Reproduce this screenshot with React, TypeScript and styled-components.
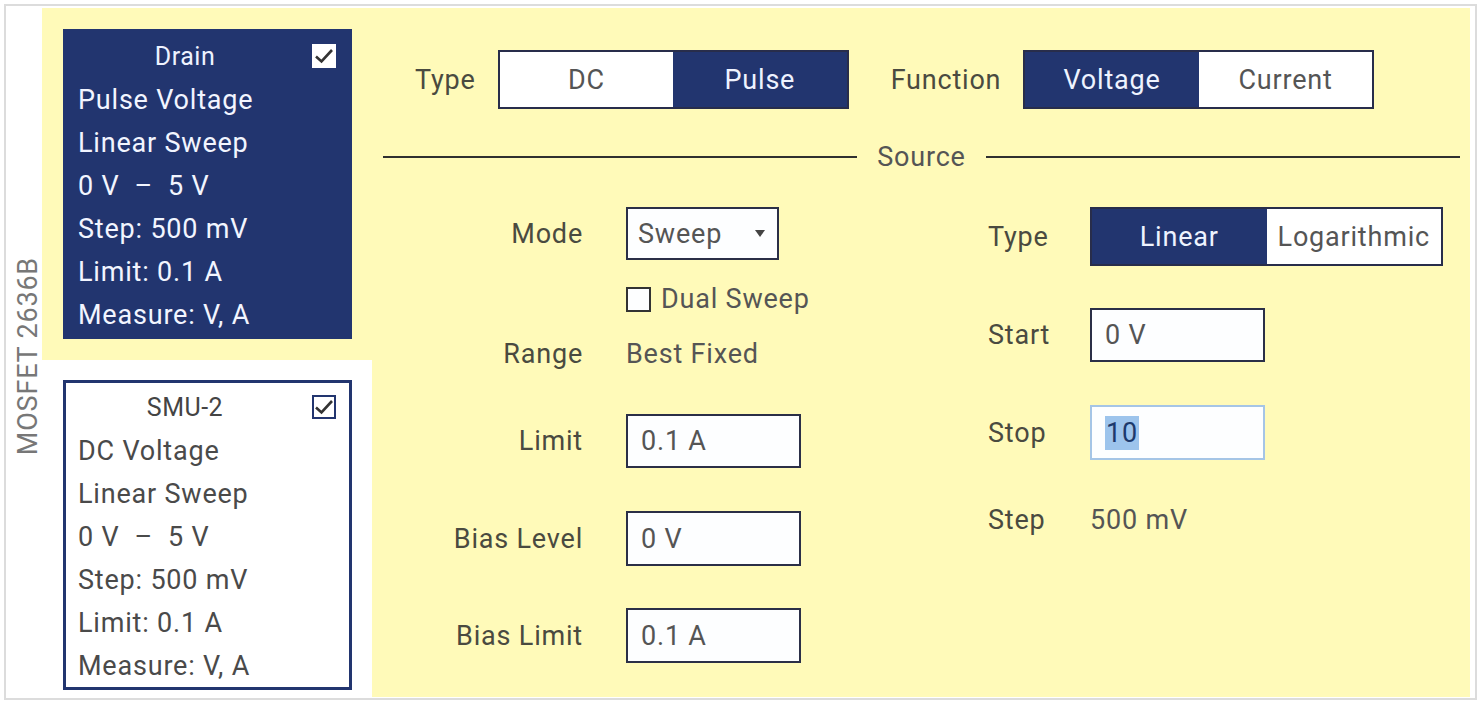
import React from 'react';
import styled, {createGlobalStyle} from 'styled-components';

const navy = '#22356f';
const yellow = '#fffab9';
const ink = '#4a4a40';

const GlobalStyle = createGlobalStyle`
  html, body {
    margin: 0;
    padding: 0;
    background: #fff;
  }
  body {
    font-family: Roboto, "Noto Sans", "Liberation Sans", sans-serif;
    letter-spacing: 0.8px;
  }
  * {
    box-sizing: border-box;
  }
`;

const Frame = styled.div`
  margin: 4px;
  height: 696px;
  border: 2px solid #dcdcdc;
  padding: 2px 5px 1px 2px;
  display: flex;
  background: #fff;
`;

const SideLabel = styled.div`
  width: 34px;
  display: flex;
  align-items: center;
  justify-content: center;
  padding: 8px 0 0 6px;
  span {
    writing-mode: vertical-rl;
    transform: rotate(180deg);
    font-size: 27px;
    color: #777;
    white-space: nowrap;
  }
`;

const Nav = styled.div`
  width: 330px;
  display: flex;
  flex-direction: column;
`;

const NavSlot = styled.div<{$active?: boolean}>`
  background: ${(p) => (p.$active ? yellow : '#fff')};
  padding: ${(p) => (p.$active ? '21px 20px 0 21px' : '20px 20px 0 21px')};
  height: ${(p) => (p.$active ? '352px' : 'auto')};
  flex: ${(p) => (p.$active ? '0 0 auto' : '1')};
`;

const Card = styled.div<{$active?: boolean}>`
  height: 310px;
  border: 3px solid ${navy};
  background: ${(p) => (p.$active ? navy : '#fff')};
  color: ${(p) => (p.$active ? '#f2f5ff' : '#4a4a4a')};
  padding: 1px 0 0 12px;
  font-size: 27px;
  line-height: 43px;
`;

const CardHead = styled.div`
  display: flex;
  align-items: center;
  height: 46px;
  padding-right: 13px;
`;

const CardTitle = styled.div<{$active?: boolean}>`
  flex: 1;
  text-align: center;
  padding-right: 20px;
  font-size: 25px;
  letter-spacing: 0.5px;
  color: ${(p) => (p.$active ? '#eef2ff' : '#444')};
`;

const CardLine = styled.div`
  white-space: pre;
`;

const Tick = styled.div<{$active?: boolean}>`
  width: 24px;
  height: 24px;
  background: #fff;
  border: ${(p) => (p.$active ? 'none' : `2px solid ${navy}`)};
  display: flex;
  align-items: center;
  justify-content: center;
  svg {
    display: block;
  }
`;

const Main = styled.div`
  flex: 1;
  background: ${yellow};
  padding: 42px 10px 0 11px;
  color: ${ink};
  font-size: 27px;
`;

const TopRow = styled.div`
  display: flex;
  align-items: center;
  height: 59px;
  padding-left: 32px;
`;

const TopLabel = styled.div<{$gap?: number}>`
  margin-left: ${(p) => p.$gap ?? 0}px;
  margin-right: 22px;
`;

const SegGroup = styled.div<{$w: number; $h: number}>`
  display: flex;
  width: ${(p) => p.$w}px;
  height: ${(p) => p.$h}px;
  border: 2px solid #282d4b;
  background: #fff;
`;

const Seg = styled.div<{$on?: boolean}>`
  flex: 1;
  display: flex;
  align-items: center;
  justify-content: center;
  background: ${(p) => (p.$on ? navy : '#fff')};
  color: ${(p) => (p.$on ? '#eef3ff' : '#555')};
`;

const Divider = styled.div`
  display: flex;
  align-items: center;
  height: 30px;
  margin-top: 33px;
  &::before,
  &::after {
    content: '';
    flex: 1;
    height: 2px;
    background: #303030;
  }
  span {
    padding: 0 20px;
    color: #555;
  }
`;

const Form = styled.div`
  display: grid;
  grid-template-columns: 605px 1fr;
  margin-top: 35px;
`;

const Col = styled.div`
  display: flex;
  flex-direction: column;
`;

const Row = styled.div<{$h: number; $mt?: number}>`
  display: flex;
  align-items: center;
  height: ${(p) => p.$h}px;
  margin-top: ${(p) => p.$mt ?? 0}px;
`;

const LeftLabel = styled.div`
  width: 200px;
  margin-right: 43px;
  text-align: right;
`;

const RightLabel = styled.div`
  width: 102px;
`;

const Field = styled.div<{$w?: number; $focus?: boolean}>`
  width: ${(p) => p.$w ?? 175}px;
  height: 100%;
  display: flex;
  align-items: center;
  padding-left: 13px;
  background: #fdfeff;
  border: 2px solid ${(p) => (p.$focus ? '#a5c5e6' : '#2b2f47')};
  color: #555;
`;

const Picked = styled.span`
  background: #9dc4ec;
  color: #1d3a6c;
  line-height: 34px;
  padding: 0 1px;
`;

const Dropdown = styled(Field)`
  padding: 0 12px 0 10px;
  justify-content: space-between;
`;

const Caret = styled.span`
  width: 0;
  height: 0;
  border-left: 5px solid transparent;
  border-right: 5px solid transparent;
  border-top: 7px solid #444;
`;

const Check = styled.div`
  display: flex;
  align-items: center;
  gap: 10px;
  color: #555;
`;

const Box = styled.span`
  width: 25px;
  height: 25px;
  border: 2px solid #333;
  background: #fdfeff;
`;

const Value = styled.div`
  color: #555;
`;

function CheckMark() {
  return (
    <svg width='20' height='18' viewBox='0 0 20 18'>
      <path d='M2 9.5 L7.5 14.5 L18 3' fill='none' stroke='#333' strokeWidth='2.6' />
    </svg>
  );
}

function ChannelCard({
  title,
  lines,
  active,
}: {
  title: string;
  lines: string[];
  active?: boolean;
}) {
  return (
    <Card $active={active}>
      <CardHead>
        <CardTitle $active={active}>{title}</CardTitle>
        <Tick $active={active}>
          <CheckMark />
        </Tick>
      </CardHead>
      {lines.map((l, i) => (
        <CardLine key={i}>{l}</CardLine>
      ))}
    </Card>
  );
}

function Segments({
  options,
  value,
  w,
  h = 59,
}: {
  options: string[];
  value: string;
  w: number;
  h?: number;
}) {
  return (
    <SegGroup $w={w} $h={h}>
      {options.map((o) => (
        <Seg key={o} $on={o == value}>
          {o}
        </Seg>
      ))}
    </SegGroup>
  );
}

export default function App() {
  return (
    <>
      <GlobalStyle />
      <Frame>
        <SideLabel>
          <span>MOSFET 2636B</span>
        </SideLabel>
        <Nav>
          <NavSlot $active>
            <ChannelCard
              active
              title='Drain'
              lines={['Pulse Voltage', 'Linear Sweep', '0 V  –  5 V', 'Step: 500 mV', 'Limit: 0.1 A', 'Measure: V, A']}
            />
          </NavSlot>
          <NavSlot>
            <ChannelCard
              title='SMU-2'
              lines={['DC Voltage', 'Linear Sweep', '0 V  –  5 V', 'Step: 500 mV', 'Limit: 0.1 A', 'Measure: V, A']}
            />
          </NavSlot>
        </Nav>
        <Main>
          <TopRow>
            <TopLabel>Type</TopLabel>
            <Segments options={['DC', 'Pulse']} value='Pulse' w={351} />
            <TopLabel $gap={42}>Function</TopLabel>
            <Segments options={['Voltage', 'Current']} value='Voltage' w={351} />
          </TopRow>
          <Divider>
            <span>Source</span>
          </Divider>
          <Form>
            <Col>
              <Row $h={53}>
                <LeftLabel>Mode</LeftLabel>
                <Dropdown $w={153}>
                  Sweep
                  <Caret />
                </Dropdown>
              </Row>
              <Row $h={38} $mt={20}>
                <LeftLabel />
                <Check>
                  <Box />
                  Dual Sweep
                </Check>
              </Row>
              <Row $h={38} $mt={17}>
                <LeftLabel>Range</LeftLabel>
                <Value>Best Fixed</Value>
              </Row>
              <Row $h={54} $mt={41}>
                <LeftLabel>Limit</LeftLabel>
                <Field>0.1 A</Field>
              </Row>
              <Row $h={55} $mt={43}>
                <LeftLabel>Bias Level</LeftLabel>
                <Field>0 V</Field>
              </Row>
              <Row $h={55} $mt={42}>
                <LeftLabel>Bias Limit</LeftLabel>
                <Field>0.1 A</Field>
              </Row>
            </Col>
            <Col>
              <Row $h={59}>
                <RightLabel>Type</RightLabel>
                <Segments options={['Linear', 'Logarithmic']} value='Linear' w={353} />
              </Row>
              <Row $h={54} $mt={42}>
                <RightLabel>Start</RightLabel>
                <Field>0 V</Field>
              </Row>
              <Row $h={55} $mt={43}>
                <RightLabel>Stop</RightLabel>
                <Field $focus>
                  <Picked>10</Picked>
                </Field>
              </Row>
              <Row $h={40} $mt={40}>
                <RightLabel>Step</RightLabel>
                <Value>500 mV</Value>
              </Row>
            </Col>
          </Form>
        </Main>
      </Frame>
    </>
  );
}
